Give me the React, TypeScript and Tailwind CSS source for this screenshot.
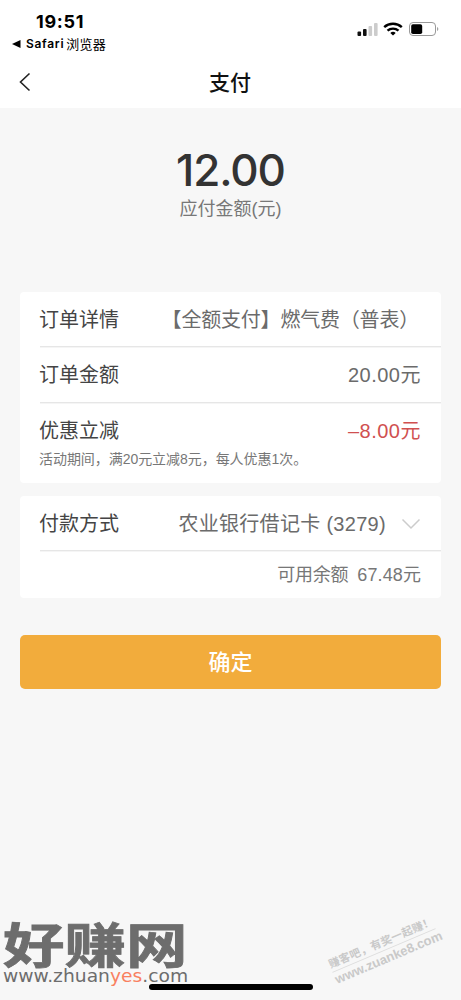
import type { ReactNode } from 'react';

function StatusBar() {
  return (
    <div className="h-[56px] flex justify-between text-black">
      <div className="pl-3 pt-[11px]">
        <div className="pl-[24px] font-['Inter'] font-bold text-[18px] leading-[21px] tracking-[0.7px]">19:51</div>
        <div className="flex items-center h-[24px] whitespace-nowrap">
          <svg width="9" height="8" viewBox="0 0 9 8" className="mr-[5px]">
            <path d="M0 4 8.5 0v8z" fill="#000" />
          </svg>
          <span className="font-['Inter','Noto_Sans_CJK_SC',sans-serif] font-semibold text-[12px] tracking-[0.7px]">Safari</span>
          <span className="font-['Noto_Sans_CJK_SC',sans-serif] text-[13px] tracking-[0.2px] ml-[2px]">浏览器</span>
        </div>
      </div>
      <div className="flex items-start pt-[21px] pr-[21px]">
        <svg width="22" height="16" viewBox="0 0 22 16">
          <rect x="0.5" y="10.5" width="3.6" height="4.5" rx="1" fill="#111" />
          <rect x="6" y="8" width="3.6" height="7" rx="1" fill="#111" />
          <rect x="11.5" y="5" width="3.6" height="10" rx="1" fill="#ccc" />
          <rect x="17" y="2" width="3.6" height="13" rx="1" fill="#ccc" />
        </svg>
        <svg width="20" height="16" viewBox="0 0 20 16" className="ml-[4px]" fill="none" stroke="#000" strokeWidth="2.4">
          <path d="M1.2 6.2a13 13 0 0 1 17.6 0" />
          <path d="M4.5 9.7a8.2 8.2 0 0 1 11 0" />
          <path d="m10 14.5-2.7-2.6a4 4 0 0 1 5.4 0z" fill="#000" stroke="none" />
        </svg>
        <svg width="31" height="16" viewBox="0 0 31 16" className="ml-[6px]">
          <rect x="0.5" y="1.5" width="26" height="13" rx="3.5" fill="none" stroke="#999" />
          <rect x="2.2" y="3.2" width="11" height="9.8" rx="1.8" fill="#000" />
          <path d="M28.3 6v4c1.3-.6 1.3-3.4 0-4z" fill="#777" />
        </svg>
      </div>
    </div>
  );
}

function Row({ label, children }: { label: string; children: ReactNode }) {
  return (
    <div className="flex items-center justify-between h-[54px] pt-[2px] pr-5 text-xl text-[#6b6b6b] whitespace-nowrap">
      <span className="text-[#444]">{label}</span>
      {children}
    </div>
  );
}

function Divider() {
  return <div className="ml-px h-[2px] border-t border-[#e6e6e6] bg-[#f5f5f5]" />;
}

export default function App() {
  return (
    <div className="relative w-[461px] h-[1000px] overflow-hidden bg-[#f7f7f7] font-['Liberation_Sans','Noto_Sans_CJK_SC',sans-serif]">
      <header className="h-[108px] bg-white">
        <StatusBar />
        <div className="flex items-center h-[52px]">
          <svg width="12" height="20" viewBox="0 0 12 20" className="ml-[19px]" fill="none" stroke="#222" strokeWidth="1.6">
            <path d="M10.5 1.5 1.5 10l9 8.5" />
          </svg>
          <h1 className="flex-1 text-center pr-[32px] text-[21px] font-medium text-[#111] font-['Noto_Sans_CJK_SC',sans-serif]">支付</h1>
        </div>
      </header>

      <section className="h-[184px] pt-[40px] text-center">
        <div className="font-['Inter'] font-medium text-[44px] leading-[44px] tracking-[-1.1px] text-[#333]">12.00</div>
        <div className="mt-[4px] text-lg leading-[26px] text-[#777]">应付金额(元)</div>
      </section>

      <main className="px-5">
        <section className="h-[191px] pl-[19px] bg-white rounded">
          <Row label="订单详情">
            <span className="tracking-[-0.2px] mr-[2px]">【全额支付】燃气费（普表）</span>
          </Row>
          <Divider />
          <div className="-mt-px mb-px">
            <Row label="订单金额">
              <span className="tracking-[0.5px]">20.00元</span>
            </Row>
          </div>
          <Divider />
          <div className="-mt-px -mb-[13px]">
            <Row label="优惠立减">
              <span className="tracking-[0.5px] text-[#d05050]">–8.00元</span>
            </Row>
          </div>
          <p className="text-sm leading-[30px] tracking-[-0.05px] text-[#777]">活动期间，满20元立减8元，每人优惠1次。</p>
        </section>

        <section className="mt-[13px] h-[102px] pl-[19px] bg-white rounded">
          <Row label="付款方式">
            <span className="flex items-center">
              <span className="tracking-[0.3px]">农业银行借记卡 (3279)</span>
              <svg width="20" height="12" viewBox="0 0 20 12" className="ml-[15px]" fill="none" stroke="#ccc" strokeWidth="1.5">
                <path d="m1.5 1.5 8.5 8.5 8.5-8.5" />
              </svg>
            </span>
          </Row>
          <Divider />
          <div className="h-[45px] pr-5 flex items-center justify-end gap-[9px] text-lg text-[#777]">
            <span className="tracking-[-0.2px]">可用余额</span>
            <span className="tracking-[0.1px]">67.48元</span>
          </div>
        </section>

        <button className="mt-[37px] w-full h-[54px] rounded-[5px] bg-[#f2ac3c] text-white text-[22px] font-medium">
          确定
        </button>
      </main>

      <div className="absolute left-[3px] top-[918px] whitespace-nowrap text-[#6d6d6d]">
        <div className="h-[51px] w-[144px] origin-top-left scale-x-[1.28] font-['Noto_Sans_CJK_SC',sans-serif] font-bold text-[48px] leading-[48px] [-webkit-text-stroke:0.8px_#6d6d6d]">好赚网</div>
        <div className="w-[168px] origin-top-left scale-x-[1.1] font-['DejaVu_Sans'] text-[17px] leading-[14px]">
          www.zhuan<span className="text-[#f98060]">yes</span>.com
        </div>
      </div>

      <div className="absolute left-[328px] top-[935px] w-[112px] -rotate-[23deg] whitespace-nowrap font-bold text-[#c9c9c9]">
        <div className="text-[11px] leading-[15px] border-b border-[#ddd] tracking-[0.3px]">赚客吧，有奖一起赚！</div>
        <div className="text-[13px] leading-[15px]">www.zuanke8.com</div>
      </div>

      <div className="absolute left-[149px] top-[984px] w-[164px] h-[6px] rounded-full bg-black" />
    </div>
  );
}
